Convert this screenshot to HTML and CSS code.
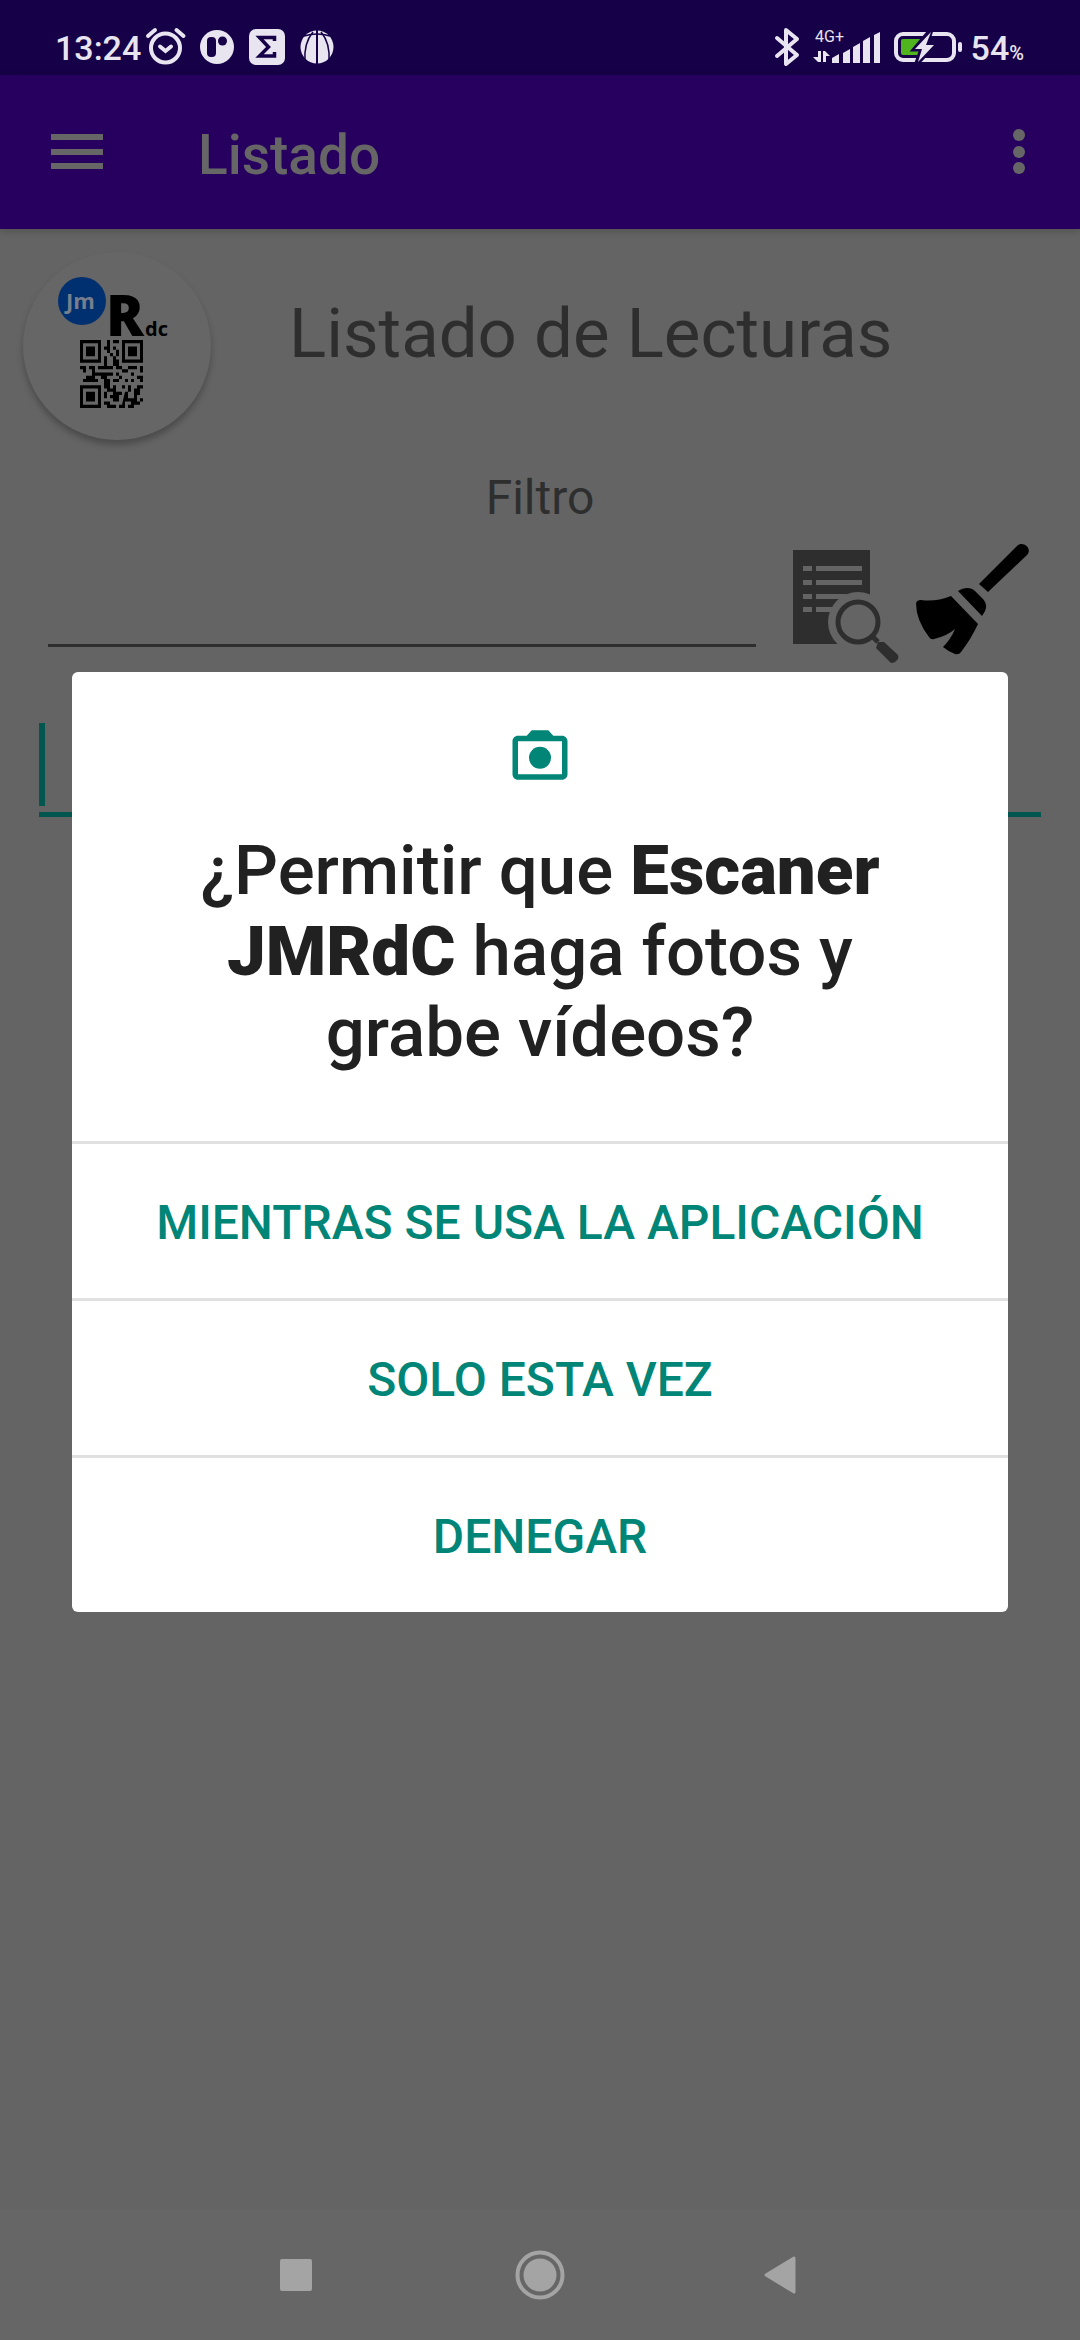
FILE: index.html
```html
<!DOCTYPE html>
<html lang="es">
<head>
<meta charset="utf-8">
<meta name="viewport" content="width=device-width">
<title>Listado</title>
<link rel="stylesheet" href="styles.css">
</head>
<body>
<header class="status">
  <div class="status-group">
    <span class="status-text">13:24</span>
    <svg class="status-icon" width="52" height="75" viewBox="142 0 52 75" fill="none" stroke="currentColor" aria-hidden="true">
      <circle cx="166.500" cy="48" r="14.500" stroke-width="4"/>
      <path d="M161 46.500l5.500 4.500 5.500-4.500M149 36l7-6M184.500 36l-7-6" stroke-width="4" stroke-linecap="round"/>
    </svg>
    <svg class="status-icon" width="48" height="75" viewBox="194 0 48 75" aria-hidden="true">
      <circle cx="218" cy="47" r="17" fill="currentColor"/>
      <rect x="208" y="37" width="9" height="20" rx="4" class="bar-ink"/>
      <circle cx="223.500" cy="41" r="4.500" class="bar-ink"/>
    </svg>
    <svg class="status-icon" width="52" height="75" viewBox="242 0 52 75" aria-hidden="true">
      <rect x="250" y="29" width="36" height="36" rx="7" fill="currentColor"/>
      <path d="M275.500 41v-3.500h-15l9 9.500-9 9h15V52" fill="none" class="bar-line" stroke-width="3.500"/>
    </svg>
    <svg class="status-icon" width="48" height="75" viewBox="294 0 48 75" aria-hidden="true">
      <circle cx="318" cy="47" r="16.500" fill="currentColor"/>
      <path d="M318 30v34" fill="none" class="bar-line" stroke-width="2"/>
      <path d="M305 36q13-4 26 0M314 32c-6 7-9 17-8 30M322 32c6 7 9 17 8 30" fill="none" class="bar-line" stroke-width="1.500"/>
    </svg>
  </div>
  <div class="status-group">
    <svg class="status-icon" width="38" height="75" viewBox="770 0 38 75" fill="none" stroke="currentColor" stroke-width="4" stroke-linejoin="round" stroke-linecap="round" aria-hidden="true">
      <path d="M778 38l20 17-11 9V30l11 9-20 17"/>
    </svg>
    <svg class="status-icon" width="80" height="75" viewBox="808 0 80 75" fill="currentColor" aria-label="4G+">
      <text x="816" y="42" class="network">4G+</text>
      <path d="M819 51h3v11h-3l-5-5h5zM824 62V51h2l5 5h-4v6zM833 58l7-4v9h-7zM844 53l7-4v14h-7zM854 47l7-4v20h-7zM864 41l7-4v26h-7zM875 35l6-3v31h-6z"/>
    </svg>
    <svg class="status-icon" width="84" height="75" viewBox="888 0 84 75" aria-hidden="true">
      <rect x="897" y="34" width="58" height="26" rx="7" fill="none" stroke="currentColor" stroke-width="4"/>
      <rect x="902" y="39" width="20" height="16" rx="2" class="charge"/>
      <path d="M932 30l-16 19h7l-5 14 17-18h-8z" class="bar-ink bar-line" stroke-width="5"/>
      <path d="M932 32l-16 17h7l-4 13 16-17h-8z" fill="currentColor"/>
      <rect x="959" y="42" width="4" height="10" rx="2" fill="currentColor"/>
    </svg>
    <span class="status-text">54<small class="percent">%</small></span>
  </div>
</header>

<div class="stage">
  <div class="appbar">
    <button class="icon-button" aria-label="Menú">
      <svg width="52" height="36" viewBox="0 0 52 36" fill="currentColor"><path d="M0 0h52v6H0zM0 15h52v6H0zM0 29h52v6H0z"/></svg>
    </button>
    <h1 class="appbar-title">Listado</h1>
    <button class="icon-button" aria-label="Más opciones">
      <svg width="12" height="46" viewBox="0 0 12 46" fill="currentColor"><circle cx="6" cy="6" r="6"/><circle cx="6" cy="23" r="6"/><circle cx="6" cy="39" r="6"/></svg>
    </button>
  </div>

  <main class="content">
    <div class="heading">
      <button class="fab" aria-label="Escanear">
        <svg width="188" height="188" viewBox="23 252 188 188">
          <circle cx="82" cy="301" r="24" fill="#003070"/>
          <text x="66" y="309" class="logo-jm">Jm</text>
          <text x="106" y="336" class="logo-r">R</text>
          <text x="145" y="336" class="logo-dc">dc</text>
          <g transform="translate(80 340) scale(3 3.240)">
            <path fill-rule="evenodd" d="M0 0h7v7H0zM1 1v5h5V1zM14 0h7v7h-7zM15 1v5h5V1zM0 14h7v7H0zM1 15v5h5v-5z"/>
            <path d="M2 2h3v3H2zM16 2h3v3h-3zM2 16h3v3H2zM9 0h1v2H9zM11 0h2v1h-2zM8 2h2v1H8zM11 2h1v1h-1zM12 3h1v2h-1zM9 3h1v1H9zM8 5h1v3h2V5h1v1h1v2h-2v1H8zM10 4h1v1h-1zM0 8h2v1H0zM3 8h2v1H3zM6 8h2v1H6zM12 8h2v1h-2zM16 8h3v1h-3zM20 8h1v2h-1zM1 9h1v1H1zM4 9h1v1h2v1H5v1h1v1H1v-1h1v-1h2zM7 10h4v1H9v1h1v3H8v-3H7zM12 10h1v1h-1zM14 9h2v1h-2zM17 10h1v1h-1zM19 11h2v2h-1v-1h-1zM11 12h2v1h-2zM15 12h1v1h-1zM13 11h1v1h-1zM17 12h1v1h-1zM9 15h2v1H9zM8 16h1v2H8zM11 14h1v2h2v1h-1v2h-2v-1h-1v-1h1zM14 14h1v1h-1zM16 14h1v2h-1zM18 15h1v-1h2v1h-1v2h-2zM15 16h1v2h2v-1h1v2h1v1h-2v1h-2v-1h1v-1h-2v2h-2v-1h1zM8 19h2v1h2v1H9v-1H8zM20 18h1v1h-1z"/>
          </g>
        </svg>
      </button>
      <h2 class="page-title">Listado de Lecturas</h2>
    </div>

    <label class="filter-label" for="filter">Filtro</label>
    <div class="filter-row">
      <input class="filter-input" id="filter" type="text">
      <button class="icon-button" aria-label="Buscar">
        <svg width="112" height="120" viewBox="790 543 112 120">
          <path fill="#2e2e2e" d="M793 550h77v94h-77z"/>
          <path fill="#646464" d="M803 566h9v5h-9zM816 566h46v5h-46zM803 580h9v5h-9zM816 580h46v5h-46zM803 594h9v5h-9zM816 594h30v5h-30zM803 607h9v5h-9zM816 607h20v5h-20z"/>
          <circle cx="858" cy="622" r="30" fill="#646464"/>
          <circle cx="858" cy="622" r="20" fill="none" stroke="#2e2e2e" stroke-width="5"/>
          <path d="M872 636l6 6" stroke="#2e2e2e" stroke-width="5"/>
          <path d="M878 642h6l14 13q1 4-1 5-2 3-6 3l-15-15z" fill="#2e2e2e"/>
        </svg>
      </button>
      <button class="icon-button" aria-label="Limpiar">
        <svg width="120" height="120" viewBox="914 543 120 120">
          <path d="M979 584l38-38c6-6 16 3 10 9l-39 37zM958 591c6-4 13-4 17 0l7 7c6 6 5 11 0 18zM951 596l27 28q-7 15-17 28-2 3-6 2-6-2-12-7 8-8 12-18-8 7-21 10-3 1-5-2-13-17-13-34 1-3 5-3 15 2 30-4z"/>
        </svg>
      </button>
    </div>

    <div class="scan-field">
      <span class="caret"></span>
      <input class="scan-input" type="text" aria-label="Lectura">
    </div>
  </main>

  <div class="overlay">
    <section class="dialog" role="dialog" aria-labelledby="question">
      <svg class="dialog-icon" width="66" height="66" viewBox="0 0 24 24" fill="currentColor" aria-hidden="true">
        <path d="M20 5h-3.170L15 3H9L7.170 5H4c-1.100 0-2 .9-2 2v12c0 1.100.9 2 2 2h16c1.100 0 2-.9 2-2V7c0-1.100-.9-2-2-2zm0 14H4V7h16z"/>
        <circle cx="12" cy="13" r="4"/>
      </svg>
      <p class="question" id="question">¿Permitir que <b>Escaner JMRdC</b> haga fotos y grabe vídeos?</p>
      <button class="choice">MIENTRAS SE USA LA APLICACIÓN</button>
      <button class="choice">SOLO ESTA VEZ</button>
      <button class="choice">DENEGAR</button>
    </section>
  </div>
</div>

<nav class="navbar">
  <button class="icon-button" aria-label="Recientes"><svg width="60" height="60" viewBox="0 0 60 60" fill="currentColor"><rect x="13" y="14" width="32" height="32" rx="2"/></svg></button>
  <button class="icon-button" aria-label="Inicio"><svg width="60" height="60" viewBox="0 0 60 60" fill="currentColor"><circle cx="30" cy="30" r="16.500"/><circle cx="30" cy="30" r="22.500" fill="none" stroke="currentColor" stroke-width="4"/></svg></button>
  <button class="icon-button" aria-label="Atrás"><svg width="60" height="60" viewBox="0 0 60 60" fill="currentColor" stroke="currentColor" stroke-width="3" stroke-linejoin="round"><path d="M13 30l28-17v34z"/></svg></button>
</nav>
</body>
</html>
```
FILE: styles.css
```css
* { box-sizing: border-box; }

body {
  margin: 0;
  min-height: 100vh;
  display: flex;
  flex-direction: column;
  background: #646464;
  color: #2e2e2e;
  font-family: Roboto, sans-serif;
}

button {
  font: inherit;
  color: inherit;
  background: none;
  border: 0;
  padding: 0;
}

svg { display: block; }

input {
  font: inherit;
  font-size: 48px;
  color: inherit;
  background: none;
  border: 0;
  outline: 0;
  padding: 0;
  min-width: 0;
}

/* System status bar */
.status {
  display: flex;
  justify-content: space-between;
  height: 75px;
  padding: 0 56px 0 55px;
  background: #160048;
  color: #e8e5f0;
}
.status-group { display: flex; }
.status-icon { flex: none; }
.status-text {
  font-size: 34px;
  font-weight: 500;
  line-height: 40px;
  padding-top: 28px;
}
.percent { font-size: 20px; }
.network { font-size: 16px; }
.bar-ink { fill: #160048; }
.bar-line { stroke: #160048; }
.charge { fill: #50b41e; }

/* App screen behind the dialog */
.stage {
  flex: 1;
  position: relative;
}
.appbar {
  display: flex;
  align-items: center;
  height: 154px;
  padding: 0 55px 0 51px;
  background: #27005f;
  color: #666;
  box-shadow: 0 2px 8px rgba(0, 0, 0, .2);
}
.appbar-title {
  flex: 1;
  margin: 0 0 0 95px;
  padding-top: 5px;
  font-size: 55px;
  font-weight: 500;
  line-height: 64px;
}

.content {
  display: flex;
  flex-direction: column;
  padding-top: 23px;
}
.heading {
  display: flex;
  gap: 78px;
  padding: 0 23px;
}
.fab {
  width: 188px;
  height: 188px;
  border-radius: 50%;
  background: #666;
  box-shadow: 0 5px 6px rgba(0, 0, 0, .25);
}
.logo-jm { font: bold 22px "Open Sans", sans-serif; fill: #777f8c; }
.logo-r { font: 800 56px "Open Sans", sans-serif; }
.logo-dc { font: bold 20px "Open Sans", sans-serif; }
.page-title {
  margin: 41px 0 0;
  font-size: 69px;
  font-weight: 400;
  line-height: 81px;
}
.filter-label {
  margin-top: 30px;
  font-size: 48px;
  line-height: 56px;
  text-align: center;
}
.filter-row {
  display: flex;
  align-items: flex-start;
  gap: 12px;
  margin-top: 17px;
  padding: 0 46px 0 48px;
}
.filter-input {
  flex: 1;
  height: 104px;
  margin-right: 22px;
  border-bottom: 3px solid #2e2e2e;
}
.scan-field {
  display: flex;
  margin: 40px 39px 0;
  padding: 20px 0 6px;
  border-bottom: 5px solid #01574f;
}
.caret {
  width: 6px;
  height: 83px;
  background: #01574f;
}
.scan-input { flex: 1; }

/* Permission dialog */
.overlay {
  position: absolute;
  inset: 0;
  display: flex;
  align-items: center;
  padding: 0 72px;
}
.dialog {
  flex: 1;
  display: flex;
  flex-direction: column;
  padding-top: 50px;
  background: #fff;
  border-radius: 6px;
  color: #008577;
}
.dialog-icon { align-self: center; }
.question {
  margin: 42px 0 0;
  padding: 0 100px 68px;
  color: #212121;
  font-size: 69px;
  font-weight: 500;
  line-height: 81px;
  text-align: center;
}
.question b { font-weight: 900; }
.choice {
  height: 157px;
  padding-top: 2px;
  border-top: 3px solid #e0e0e0;
  font-size: 48px;
  font-weight: 500;
}

/* System navigation */
.navbar {
  display: flex;
  align-items: center;
  justify-content: center;
  gap: 183px;
  height: 131px;
  background: #666;
  color: #a4a4a4;
}
```
